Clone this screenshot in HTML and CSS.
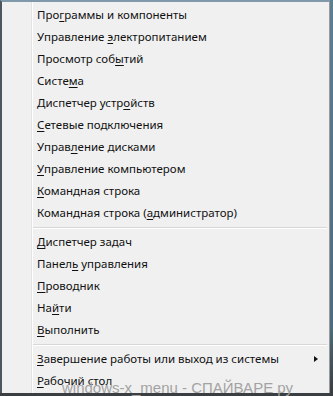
FILE: index.html
```html
<!DOCTYPE html>
<html lang="ru">
<head>
<meta charset="utf-8">
<link rel="stylesheet" href="styles.css">
</head>
<body>
<div class="screen">
  <div class="menu">
    <div class="item">Про<u>г</u>раммы и компоненты</div>
    <div class="item">Управление <u>э</u>лектропитанием</div>
    <div class="item">Просмотр соб<u>ы</u>тий</div>
    <div class="item">Систе<u>м</u>а</div>
    <div class="item">Диспетчер устр<u>о</u>йств</div>
    <div class="item"><u>С</u>етевые подключения</div>
    <div class="item">Управ<u>л</u>ение дисками</div>
    <div class="item"><u>У</u>правление компьютером</div>
    <div class="item"><u>К</u>омандная строка</div>
    <div class="item">Командная строка (<u>а</u>дминистратор)</div>
    <div class="sep"></div>
    <div class="item"><u>Д</u>испетчер задач</div>
    <div class="item">Панел<u>ь</u> управления</div>
    <div class="item"><u>П</u>роводник</div>
    <div class="item">На<u>й</u>ти</div>
    <div class="item"><u>В</u>ыполнить</div>
    <div class="sep"></div>
    <div class="item sub"><span><u>З</u>авершение работы или выход из системы</span><span class="arrow"></span></div>
    <div class="item"><u>Р</u>абочий стол</div>
  </div>
  <div class="watermark">windows-x_menu - СПАЙВАРЕ ру</div>
</div>
</body>
</html>
```
FILE: styles.css
```css
html, body {
  margin: 0;
  padding: 0;
}
body {
  background: #3d464c;
  width: 333px;
  height: 396px;
  overflow: hidden;
}
.screen {
  position: relative;
  width: 333px;
  height: 396px;
  background: linear-gradient(to bottom, #5f7e92 0, #4f6a7a 330px, #3a3f43 392px);
}
.menu {
  box-sizing: border-box;
  width: 330px;
  height: 393px;
  border-top: 2px solid #7f99ab;
  border-left: 2px solid #4c565e;
  border-right: 1px solid #9a9a9a;
  padding-top: 2px;
  background-color: #f0f0f0;
  background-image: linear-gradient(to right, transparent 29px, #e3e3e3 29px, #e3e3e3 30px, #ffffff 30px, #ffffff 31px, transparent 31px);
  font-family: "Noto Sans", "Open Sans", sans-serif;
  font-size: 11.5px;
  color: #111;
}
.item {
  height: 22px;
  line-height: 22px;
  padding-left: 35px;
  white-space: nowrap;
}
.item u {
  text-decoration-thickness: 1px;
  text-underline-offset: 2px;
}
.sub {
  display: flex;
  align-items: center;
  justify-content: space-between;
  padding-right: 11px;
}
.arrow {
  width: 0;
  height: 0;
  border-top: 3.5px solid transparent;
  border-bottom: 3.5px solid transparent;
  border-left: 4px solid #111;
}
.sep {
  height: 7px;
  margin-left: 31px;
  margin-right: 2px;
  background: linear-gradient(to bottom, transparent 3px, #d8d8d8 3px, #d8d8d8 4px, #ffffff 4px, #ffffff 5px, transparent 5px);
}
.watermark {
  position: absolute;
  left: 62px;
  top: 379px;
  font-family: "Liberation Sans", Arial, sans-serif;
  font-size: 15px;
  line-height: 17px;
  color: #a3a3a3;
  white-space: nowrap;
}
```
